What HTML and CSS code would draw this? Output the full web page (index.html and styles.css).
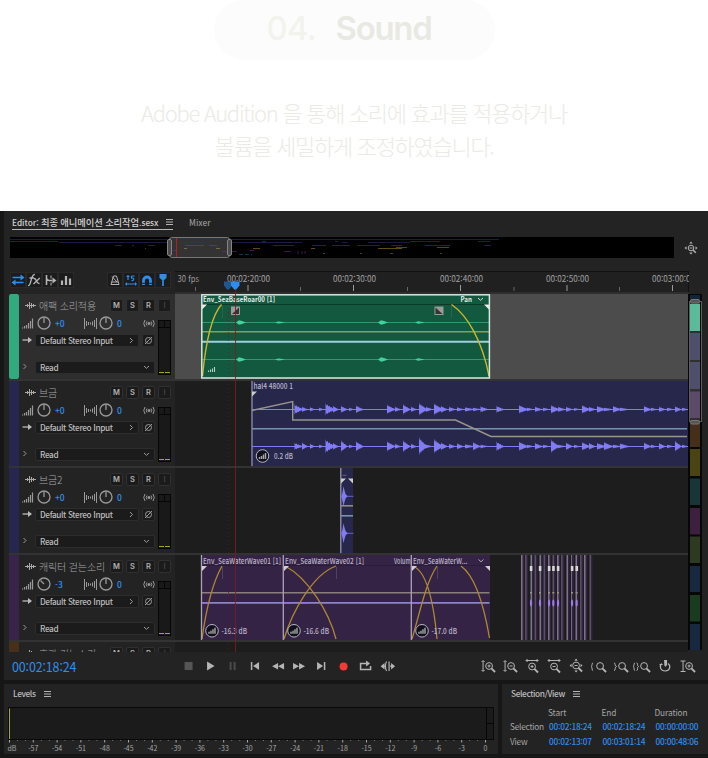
FILE: index.html
```html
<!DOCTYPE html>
<html lang="ko">
<head>
<meta charset="utf-8">
<title>04. Sound</title>
<link rel="stylesheet" href="styles.css">
</head>
<body>
<header class="intro">
  <h1 class="pill"><span class="num">04.</span><span class="word">Sound</span></h1>
  <p class="lead">Adobe Audition 을 통해 소리에 효과를 적용하거나<br>볼륨을 세밀하게 조정하였습니다.</p>
</header>

<svg width="0" height="0" class="defs">
  <defs>
    <g id="burger"><path d="M0 .5h7M0 3h7M0 5.500h7" stroke="#b4b4b4" stroke-width="1"/></g>
    <g id="lens"><circle cx="11" cy="10" r="3.400"/><path d="M13.300 12.300L17 16" stroke-width="1.800"/></g>
    <g id="badge"><circle cx="0" cy="0" r="6.300" fill="#11111d" stroke="#b8b5c4" stroke-width="1"/><path d="M-3 3V1M-1 3V0M1 3V-1.500M3 3V-3" stroke="#aaa" stroke-width="1.400"/></g>
  </defs>
</svg>

<main class="app">
  <section class="editor">
    <nav class="tabs">
      <span class="tab active"><span>Editor: <span class="ko">최종 애니메이션 소리작업</span>.sesx</span><svg width="7" height="7"><use href="#burger"/></svg></span>
      <span class="tab">Mixer</span>
    </nav>

    <div class="overview">
      <svg class="map" viewBox="10 237 664 21" width="664" height="21">
        <rect x="10" y="237" width="664" height="21" fill="#000"/>
        <path d="M10 239.500H499" stroke="#0c2440"/>
        <path d="M10 241.500H58M190 241.500H205M262 241.500H266M335 241.500H338M410 241.500H440M478 241.500H490" stroke="#0d3020"/>
        <path d="M59 242.500H302M342 242.500H348M368 242.500H410" stroke="#1c1840"/>
        <path d="M115 245.500H122M132 245.500H134M148 245.500H155M273 245.500H294M312 245.500H326M332 245.500H350M357 245.500H380M391 245.500H402M425 245.500H450M484 245.500H491" stroke="#2b1d4a"/>
        <path d="M253 248.500H260M311 248.500H315M378 248.500H402" stroke="#604b18"/><path d="M396 247.500H407M437 247.500H449" stroke="#693b10"/>
        <path d="M145 248.500h1M323 253.500h2M360 253.500h2M390 253.500h3M440 253.500h2" stroke="#3d4a20"/>
        <path d="M232 251.500h5M250 250.500h4M284 251.500h7M298 250.500v4M302 251v3M305 251v3" stroke="#3d154a"/>
        <path d="M239 254.500H252" stroke="#173455" stroke-dasharray="4 2"/>
        <rect x="169.500" y="237.500" width="60" height="20" rx="2" fill="#333" stroke="#777"/>
        <path d="M172 239.500H226" stroke="#25364a"/><path d="M180 242.500H206" stroke="#263e35"/><path d="M185 245.500H204M209 245.500H217" stroke="#4a4065"/>
        <path d="M184 248.500H187M216 248.500H220" stroke="#756a38"/><path d="M173 250.500h4M222 251.500h5" stroke="#553067"/>
        <path d="M176.500 238V257" stroke="#b0201c"/>
        <rect x="167.500" y="239.500" width="4" height="16" rx="1.500" fill="#4b4b4b" stroke="#858585"/>
        <rect x="227.500" y="239.500" width="4" height="16" rx="1.500" fill="#4b4b4b" stroke="#858585"/>
      </svg>
      <svg class="navicon" viewBox="0 0 14 14" width="14" height="14" fill="none" stroke="#b4b4b4"><circle cx="7" cy="7" r="2.800"/><path d="M5.500 7h3"/><path d="M9 9l2.800 2.800" stroke-width="1.500"/><path d="M7 .5L5.300 2.500h3.400zM7 13.500l-1.700-2h3.400zM.5 7l2-1.700v3.400zM13.500 7l-2-1.700v3.400z" fill="#b4b4b4" stroke="none"/></svg>
    </div>

    <div class="toolrow">
      <div class="tools">
        <svg class="tool on" viewBox="1 1 14 14"><path d="M2.500 5.500H12M4.500 10.500H13.500" stroke-width="1.600"/><path d="M10.500 2.500l4 3-4 3zM5.500 7.500l-4 3 4 3z" class="f"/></svg>
        <svg class="tool" viewBox="1 1 14 14"><path d="M2 13.500C5.500 14.500 4.500 1.800 8.800 2.500M3.500 6H8M8 6.500c3.500 0 1.500 5.500 5.500 5M13.800 6L7.500 12" stroke-width="1.300"/></svg>
        <svg class="tool" viewBox="1 1 14 14"><path d="M4.500 3V13M4.500 4v2c0 2 1 2.500 3 2.500h3" stroke-width="1.600"/><path d="M10.500 5.500l4 3-4 3z" class="f"/><path d="M9 3.500v3M9 10.500v3"/></svg>
        <svg class="tool" viewBox="1 1 14 14"><path d="M4 13V8.500M8 13V4M12 13V6.500" stroke-width="2.200"/></svg>
        <span class="grow"></span>
        <svg class="tool" viewBox="1 1 14 14"><path d="M4 12.500L6.500 4h3l2.500 8.500zM5 10h6M5 4.500l5 5.500"/></svg>
        <svg class="tool on" viewBox="1 1 14 14"><path d="M5 3v5M3.500 4.500h3M8.500 4h3M8.500 4v2c3-.5 3 3 0 2.500M3.500 12h9" stroke-width="1.200"/><path d="M4 10l-2 2 2 2zM12 10l2 2-2 2z" class="f"/></svg>
        <svg class="tool on" viewBox="1 1 14 14"><path d="M4.500 13V8.500a3.500 3.500 0 017 0V13" stroke-width="2.800"/><path d="M2.500 11.300h4M9.500 11.300h4" stroke="#1c1c1c"/></svg>
        <svg class="tool on" viewBox="1 1 14 14"><path d="M8 6v8" stroke-width="1.700"/><path d="M4.500 2h7v4L9 8H7L4.500 6z" class="f"/></svg>
      </div>
      <svg class="ruler" viewBox="175 271 514 23" width="514" height="23" id="ruler"></svg>
    </div>

    <div class="session">
      <div class="tracks" id="tracks"></div>
      <svg class="minimap" viewBox="688 294 15 358" width="15" height="358">
        <rect x="688" y="294" width="14" height="356" fill="#070707"/>
        <rect x="690" y="295" width="10" height="7" fill="#12243c"/>
        <rect x="690" y="300" width="10" height="124" fill="#303030"/>
        <rect x="690" y="304" width="10" height="27" fill="#5bba9a"/>
        <rect x="690" y="333" width="10" height="27" fill="#504e6d"/>
        <rect x="690" y="362" width="10" height="27" fill="#504e6d"/>
        <rect x="690" y="391.500" width="10" height="26.500" fill="#5b4b68"/>
        <rect x="690" y="424" width="10" height="23" fill="#462f1a"/>
        <rect x="690" y="449" width="10" height="27" fill="#4a4414"/>
        <rect x="690" y="478.500" width="10" height="26.500" fill="#1a3536"/>
        <rect x="690" y="508" width="10" height="26.500" fill="#3d1f40"/>
        <rect x="690" y="536.500" width="10" height="26.500" fill="#2d3920"/>
        <rect x="690" y="566" width="10" height="26" fill="#18293f"/>
        <rect x="690" y="595" width="10" height="26.500" fill="#1b3b20"/>
        <rect x="690" y="624" width="10" height="26" fill="#18293f"/>
        <rect x="689.500" y="301.500" width="12" height="120" fill="none" stroke="#5c5c5c"/>
        <rect x="690.500" y="299.500" width="9" height="3.500" rx="1.500" fill="#555" stroke="#777"/>
        <rect x="690.500" y="420.500" width="9" height="3.500" rx="1.500" fill="#555" stroke="#777"/>
      </svg>
      <svg class="playhead" viewBox="220 281 24 371" width="24" height="371">
        <path d="M228.500 292V652" stroke="#6c1518" stroke-opacity=".7" stroke-dasharray="1 3"/>
        <path d="M235.500 290V652" stroke="#7d1c1e" stroke-opacity=".85"/>
        <path d="M224 281.500h8v4l-3 4h-2l-3-4z" fill="#22568f"/>
        <path d="M231 281.500h8.500v4l-3.300 4h-2l-3.200-4z" fill="#2f8eed"/>
      </svg>
    </div>

    <div class="transport">
      <span class="clock">00:02:18:24</span>
      <div class="btns">
        <svg viewBox="0 0 22 22"><rect x="7.500" y="7" width="8" height="8" fill="#555" stroke="none"/></svg>
        <svg viewBox="0 0 22 22"><path d="M8 6.500l7.500 4.500-7.500 4.500z" class="f"/></svg>
        <svg viewBox="0 0 22 22"><path d="M9.500 7v8M13.500 7v8" stroke="#4c4c4c" stroke-width="2"/></svg>
        <svg viewBox="0 0 22 22"><path d="M8.500 7v8" stroke-width="1.500"/><path d="M16 7v8l-6-4z" class="f"/></svg>
        <svg viewBox="0 0 22 22"><path d="M12 8v6.500l-6-3.300zM18 8v6.500l-6-3.300z" class="f"/></svg>
        <svg viewBox="0 0 22 22"><path d="M5 8v6.500l6-3.300zM11 8v6.500l6-3.300z" class="f"/></svg>
        <svg viewBox="0 0 22 22"><path d="M14.500 7v8" stroke-width="1.500"/><path d="M7 7v8l6-4z" class="f"/></svg>
        <svg viewBox="0 0 22 22"><circle cx="11.500" cy="11.500" r="4" fill="#f23a36" stroke="none"/></svg>
        <svg viewBox="0 0 22 22"><path d="M9 8.500H6.500v6h10V11M9 8.500h4" stroke-width="1.500"/><path d="M12 5.500l4 3-4 3z" class="f"/></svg>
        <svg viewBox="0 0 22 22"><path d="M7 11.200h3M14 11.200h3M10.500 6.500c-1.500 2-1.500 7.500 0 9.500M13 6.500v9.500" stroke-width="1.200"/><path d="M8.500 8v6.400l-4-3.200zM15 8v6.400l4-3.200z" class="f"/></svg>
      </div>
      <div class="btns zooms">
        <svg viewBox="0 0 22 22"><path d="M6 6v10M4.500 7L6 5.500 7.500 7M4.500 15L6 16.500 7.500 15"/><g transform="translate(1 1)"><use href="#lens"/><path d="M9.500 10h3M11 8.500v3"/></g></svg>
        <svg viewBox="0 0 22 22"><path d="M6 6v10M4.500 7L6 5.500 7.500 7M4.500 15L6 16.500 7.500 15"/><g transform="translate(1 1)"><use href="#lens"/><path d="M9.500 10h3"/></g></svg>
        <svg viewBox="0 0 22 22"><path d="M5 5.500h12M6.500 4L5 5.500 6.500 7M15.500 4L17 5.500 15.500 7"/><g transform="translate(0 1.500)"><use href="#lens"/><path d="M9.500 10h3M11 8.500v3"/></g></svg>
        <svg viewBox="0 0 22 22"><path d="M5 5.500h12M6.500 4L5 5.500 6.500 7M15.500 4L17 5.500 15.500 7"/><g transform="translate(0 1.500)"><use href="#lens"/><path d="M9.500 10h3"/></g></svg>
        <svg viewBox="0 0 22 22"><g transform="translate(0 .5)"><use href="#lens"/><path d="M9.500 10h3"/></g><path d="M11 3.500L9.300 5.700h3.400zM11 17.500l-1.700-2h3.400zM4.500 10.500l2-1.700v3.400zM17.500 10.500l-2-1.700v3.400z" class="f"/></svg>
        <svg viewBox="0 0 22 22"><path d="M6 8c-2 0 0 3-2 3.500 2 .5 0 4 2 4"/><g transform="translate(2 1)"><use href="#lens"/></g></svg>
        <svg viewBox="0 0 22 22"><path d="M5 8c2 0 0 3 2.500 3.500C5 12 7 15.500 5 15.500"/><g transform="translate(2 1)"><use href="#lens"/></g></svg>
        <svg viewBox="0 0 22 22"><path d="M4 8c-2 0 0 3-2 3.500 2 .5 0 4 2 4M5.500 8c2 0 0 3 2 3.500-2 .5 0 4-2 4"/><g transform="translate(2 1)"><use href="#lens"/></g></svg>
        <svg viewBox="0 0 22 22"><path d="M7.500 8.500c-2.500 3-1 7.500 3.500 7.500 5 0 6-5 3-7.500M11 11V5.500M5.500 9.500h3" stroke-width="1.200"/><path d="M8.500 5.500h5M10 5h3v5l-2 2z" class="f"/></svg>
        <svg viewBox="0 0 22 22"><path d="M4.500 6h5M4.500 16.500h5M7 6v10.500"/><g transform="translate(2 1)"><use href="#lens"/><path d="M9.500 10h3M11 8.500v3"/></g></svg>
      </div>
    </div>
  </section>

  <div class="bottom">
    <section class="panel levels">
      <h2>Levels<svg width="7" height="7"><use href="#burger"/></svg></h2>
      <svg id="levels" viewBox="4 703 494 51" width="494" height="51"></svg>
    </section>
    <section class="panel selview">
      <h2>Selection/View<svg width="7" height="7"><use href="#burger"/></svg></h2>
      <div class="grid">
        <span></span><b class="st">Start</b><b class="st">End</b><b class="st">Duration</b>
        <b>Selection</b><i>00:02:18:24</i><i>00:02:18:24</i><i>00:00:00:00</i>
        <b>View</b><i>00:02:13:07</i><i>00:03:01:14</i><i>00:00:48:06</i>
      </div>
    </section>
  </div>
</main>
<script src="app.js"></script>
</body>
</html>
```
FILE: styles.css
```css
* { box-sizing: border-box; }
body { margin: 0; width: 708px; height: 758px; overflow: hidden; background: #fff; font-family: "Noto Sans CJK KR", "Noto Sans", sans-serif; }
svg { display: block; }
.defs { position: absolute; }
.intro { height: 211px; text-align: center; overflow: hidden; }
.pill { margin: 0 auto; width: 281px; height: 60px; background: #fcfcfc; border-radius: 30px; display: flex; padding-left: 53px; font-family: Inter, sans-serif; font-size: 33px; line-height: 57px; gap: 20px; }
.num { color: #f3f3ee; font-weight: 500; width: 49px; letter-spacing: -.8px; text-align: left; }
.word { color: #e9e9e3; font-weight: 600; letter-spacing: -1.300px; }
.lead { margin: 36px 0 0; font-weight: 300; font-size: 22px; line-height: 32.500px; letter-spacing: -1.300px; color: #ebebe6; white-space: nowrap; }

.app { height: 547px; background: #161616; color: #b9b9b9; font-size: 9px; padding-left: 4px; }
.editor { height: 469px; background: #232323; }
.tabs { height: 26px; display: flex; padding: 3px 0 0 8px; gap: 16px; line-height: 14px; font-weight: 500; font-size: 8.300px; }
.tab { height: 16px; display: flex; align-items: center; color: #959595; white-space: nowrap; }
.tab.active { width: 161px; justify-content: space-between; color: #d2d2d2; border-bottom: 1.500px solid #b8b8b8; }
.tab svg { margin-top: 2px; }
.ko { font-size: 9.300px; letter-spacing: -.1px; }
.overview { height: 21px; display: flex; padding-left: 6px; gap: 10px; }
.navicon { margin-top: 4px; }
.toolrow { display: flex; margin-top: 13px; height: 23px; }
.tools { width: 171px; display: flex; padding: 1px 4px 0 6px; }
.tool { width: 16px; height: 16px; background: #1c1c1c; border: 1px solid #292929; fill: none; stroke: #b5b5b5; }
.tool .f, .btns .f { fill: #b5b5b5; stroke: none; }
.tool.on { stroke: #2f8eed; }
.tool.on .f { fill: #2f8eed; }
.grow { flex: 1; }
.session { position: relative; display: flex; height: 358px; padding-left: 5px; }
.tracks { width: 679px; height: 358px; overflow: hidden; background: #333; }
.playhead { position: absolute; left: 216px; top: -13px; }
.track { display: flex; height: 85px; margin-bottom: 2px; background: #1d1d1d; }
.strip { width: 10px; flex: none; }
.head { width: 156px; flex: none; background: #232323; display: flex; padding: 5px 4px 0 3px; gap: 3px; }
.track.sel .head { background: #2e2e2e; }
.track.sel .strip { border-radius: 2px; }
.left { width: 133px; }
.left svg { flex: none; }
.row { display: flex; align-items: center; height: 13px; }
.name { gap: 3px; color: #a8a8a8; font-size: 10px; padding-left: 3px; }
.name .t { flex: 1; line-height: 13px; white-space: nowrap; font-weight: 300; letter-spacing: -.15px; }
.btn { width: 13px; height: 13px; background: #1b1b1b; border: 1px solid #303030; border-radius: 2px; color: #b0b0b0; font: 600 7.500px/12px Inter, sans-serif; text-align: center; flex: none; }
.btn.off { color: #444; }
.knobs { height: 22px; color: #2f8eed; font-weight: 500; font-size: 8.500px; }
.knobs svg + svg { margin-left: 3px; }
.knobs .v { width: 33px; padding-left: 4px; flex: none; }
.knobs .v + svg + svg { margin-left: 2px; }
.knobs .p { width: 30px; padding-left: 4px; flex: none; }
.io { gap: 3px; }
.box { height: 13px; background: #1b1b1b; border: 1px solid #2d2d2d; border-radius: 2px; display: flex; align-items: center; justify-content: space-between; padding: 0 4px; line-height: 11px; color: #bcbcbc; font-weight: 500; font-size: 8.200px; letter-spacing: -.35px; white-space: nowrap; }
.box.in { width: 104px; }
.box.ph { width: 13px; padding: 0; justify-content: center; }
.box.read { width: 120px; }
.auto { margin-top: 14px; gap: 3px; }
.right { width: 13px; display: flex; flex-direction: column; gap: 8px; }
.lane { flex: none; }
.lane text, .ruler text, .levels text { font-family: "Noto Sans CJK KR", sans-serif; }

.transport { display: flex; height: 28px; align-items: center; padding-left: 8px; }
.clock { width: 165px; color: #2f8eed; font-size: 12.500px; line-height: 16px; padding-top: 2px; letter-spacing: -.15px; }
.btns { display: flex; width: 221.500px; }
.btns svg { width: 22.150px; height: 22px; fill: none; stroke: #b5b5b5; flex: none; }
.zooms { margin-left: 78px; }
.bottom { display: flex; gap: 4px; margin-top: 4px; height: 70px; }
.panel { background: #232323; }
.levels { width: 494px; }
.selview { flex: 1; }
.panel h2 { margin: 0; font-size: 8.300px; font-weight: 500; letter-spacing: -.38px; color: #bdbdbd; height: 19px; line-height: 19px; display: flex; align-items: center; gap: 8px; padding-left: 9px; }
.panel h2 svg { margin-top: 2px; }
.grid { display: grid; grid-template-columns: 39px 53.500px 53px 50px; grid-template-rows: 14px 15px 15px; padding: 3px 0 0 8px; font-size: 8.300px; line-height: 13px; white-space: nowrap; }
.grid b { font-weight: 400; color: #a6a6a6; letter-spacing: -.25px; }
.grid b.st { margin-left: -1px; letter-spacing: -.1px; }
.grid i { font-style: normal; font-weight: 500; color: #2f8eed; letter-spacing: -.22px; }
```
FILE: app.js
```js
const TEXT = (x, y, s, w, fill = '#c8c6d2', size = 7.5, wt = 500) =>
  `<text x="${x}" y="${y}" font-size="${size}" font-weight="${wt}" fill="${fill}"${w ? ` textLength="${w}" lengthAdjust="spacingAndGlyphs"` : ''}>${s}</text>`;

// Ruler
let r = '<rect x="175" y="271" width="514" height="23" fill="#202020"/><path d="M175 271.500H688.500V292" fill="none" stroke="#111"/><path d="M175 293H689" stroke="#2e2e2e" stroke-width="2"/>';
r += TEXT(177.5, 282, '30 fps', 21.5, '#9c9c9c', 8.5, 400);
[[227, '00:02:20:00'], [333, '00:02:30:00'], [440, '00:02:40:00'], [546, '00:02:50:00'], [652, '00:03:00:00']].forEach(([x, s]) => {
  r += TEXT(x, 282, s, 43, '#a0a0a0', 8.5, 400);
});
[248, 353.500, 460.500, 567, 672.500].forEach(x => { r += `<path d="M${x} 285v6" stroke="#999"/>`; });
[195.500, 300.500, 407.500, 514, 619.500].forEach(x => { r += `<path d="M${x} 287v4" stroke="#666"/>`; });
document.getElementById('ruler').innerHTML = r;

// Waveform built from bursts [x, amplitude, length]
function wave(bursts, cy, x0, x1, color) {
  let d = `M${x0} ${cy - .4}H${x1}V${cy + .4}H${x0}z`;
  bursts.forEach(([x, a, len]) => {
    let top = `M${x} ${cy}`, bot = '';
    for (let i = 0; i <= len; i++) {
      const k = a * .9 * Math.pow(1 - i / (len + 1), 1.2) * (i % 2 ? .65 : 1) + .3;
      top += `L${x + i} ${cy - k}`;
      bot = `L${x + i} ${cy + k * .9}` + bot;
    }
    d += top + bot + 'z';
  });
  return `<path d="${d}" fill="${color}"/>`;
}
const music = [[294.500,6,8],[302,3,5],[310,2.500,4],[319,2,4],[325.500,7,9],[333,4,5],[341,4,6],[349,2,4],[356,4.500,7],[387,5.500,8],[395,3,5],[403,6,7],[411,3,5],[419,7.500,8],[426,3,6],[434,7,9],[441,4,6],[449,3,6],[457,2.500,6],[465,2.500,9],[473,2,7],[480.500,3.500,7],[496.500,4,7],[519,5,9],[527,2,6],[535,3,7],[543,2,6],[551,5,8],[558,3,7],[566,3,6],[574,1.500,5],[582,5,8],[589,3,6],[597,4,9],[604,2,9],[613,4,8],[620,2,9],[644,4,7],[651,2,5],[659,3,6],[667,2,6],[675,3.500,6],[682,2,5]];
const music2 = music.map(([x, a, l], i) => [x, Math.max(2, a + [-2, 1.5, .5, 0, 1, 0, 3][i % 7]), l]);

const badge = (x, y) => `<use href="#badge" x="${x}" y="${y}"/>`;
const line = (d, c, w = 1, extra = '') => `<path d="${d}" fill="none" stroke="${c}" stroke-width="${w}" ${extra}/>`;

// Lane 1
let roar = '<rect x="175" y="294" width="513" height="85" fill="#4c4c4c"/><rect x="201.800" y="295" width="287.400" height="83" fill="#12593f"/>';
roar += line('M202 304.500H489', '#0a3a29') + line('M202 322.500H489M202 359.500H489', '#2f9870') + line('M202 331.700H489', '#8c9b62', 1.5) + line('M202 341.800H489', '#a0cfdc', 2);
[322.5, 359.5].forEach(y => {
  [[240,2.200],[382,2.200],[279,.9],[419,1.200]].forEach(([x, h]) => { roar += `<path d="M${x - 4} ${y}L${x - 1} ${y - h}L${x + 2} ${y - h * .7}L${x + 6} ${y}L${x + 2} ${y + h * .7}L${x - 1} ${y + h}z" fill="#42d29c"/>`; });
});
roar += line('M202.500 376C206 340 212 315 221.500 304.500M451.500 304.500C467 315 482 340 489 376', '#d0b52e', 1.4) + line('M222.500 306v12M451.500 306v12', '#286b53', .8);
[[231, 0], [434.500, 1]].forEach(([x, f]) => { roar += `<rect x="${x}" y="306.500" width="9" height="8.500" fill="#9b9b9b"/><path d="${f ? `M${x + 1} 314V307.500L${x + 8} 314z` : `M${x + 1} 314L${x + 8} 307.500V314z`}" fill="#343434"/>`; });
roar += '<path d="M202 304.500h5l-5 5zM489 304.500h-5l5 5z" fill="#eee"/>' + line('M208.500 372v-1.500M210.500 372v-2.500M212.500 372v-3.500M214.500 372v-5', '#b5cfc5', 1.100);
roar += '<rect x="201.800" y="294.800" width="287.600" height="83.200" fill="none" stroke="#d5e8df" stroke-width="1.500"/>';
roar += TEXT(203, 301.8, 'Env_SeaBaseRoar00 [1]', 72, '#e3ece8', 7, 700) + TEXT(460.500, 301.8, 'Pan', 11.5, '#e3ece8', 7, 700) + line('M478 298l2.500 2.300L483 298', '#ddd');

// Lane 2
let hal = '<rect x="251" y="381" width="437" height="85" fill="#27264b"/>' + line('M252 381V466', '#817f9d', 1.5);
hal += wave(music, 409.500, 252, 688, '#817cf3') + wave(music2, 446.500, 252, 688, '#817cf3');
hal += line('M252 428.800H687', '#7794ab', 1.6) + line('M252 410.500L292.700 401.500V420H455.500L491 436.500H687', '#98968c', 1.4);
hal += '<path d="M252 391.500h5l-5 5z" fill="#ccc"/>' + TEXT(253.5, 389, 'hal4 48000 1', 39.5, '#b9b8c8') + badge(262.5, 456) + TEXT(274, 459.3, '0.2 dB', 19, '#b9b8c8');

// Lane 3
let small = '<rect x="340" y="468" width="13" height="85" fill="#27264b"/>' + line('M340.800 468V553', '#9594ad', 1.3);
small += line('M341 505.800H353', '#8f8d7f', 1.6) + line('M341 515.800H353', '#7794ab', 1.6) + line('M341 496.300H353.500M341 533.300H353.500', '#6f6bdb', .9) + line('M342.500 475.300h4', '#77758f', .8);
[496.3, 533.3].forEach(y => { small += `<path d="M341.500 ${y}l1-4 1-6 1.200 5 1 3 2 2-2 2-1 3-1.200 5-1-5z" fill="#817cf3"/>`; });
small += '<path d="M341 478.500h5l-5 5zM353 478.500h-5l5 5z" fill="#ccc"/>';

// Lane 4
let sea = '<rect x="201" y="555" width="289" height="85" fill="#352346"/>' + line('M202 565.500H489', '#2a1b39');
sea += line('M202 592.700H489.500', '#8a807b', 1.6) + line('M202 602.800H489.500', '#8b84c6', 1.7) + line('M202 602.800H208M284 602.800H291M300 602.800h8M412 602.800h8', '#9470e0', 1.5);
sea += line('M202 639C206 610 213 582 222 566M284 639C292 612 313 574 336 566M285 566C308 578 329 612 336 639M412 639C420 612 426 582 437 566M413 566C428 572 434 606 437 639M461 566C475 576 484 606 489.500 638', '#ad8a32', 1.3);
sea += line('M201.500 555V640M283.300 555V640M411.300 555V640', '#aaa3b6', 1.3) + line('M336.500 567v12M437.500 567v12M222.500 567v12', '#584968', .8);
sea += '<path d="M202 566h5l-5 5zM284 566h5l-5 5zM412 566h5l-5 5zM490 566h-5l5 5z" fill="#d0ccd5"/>';
sea += TEXT(203, 563.7, 'Env_SeaWaterWave01 [1]', 78, '#bbb4c6') + TEXT(285, 563.7, 'Env_SeaWaterWave02 [1]', 79, '#bbb4c6') + TEXT(394, 563.7, 'Volum', 16.500, '#bbb4c6') + TEXT(413, 563.7, 'Env_SeaWaterW...', 54.5, '#bbb4c6') + line('M478.500 559.500l2.500 2.300 2.500-2.300', '#aaa');
[[212, '-16.3 dB'], [294, '-16.6 dB'], [422, '-17.0 dB']].forEach(([x, s]) => { sea += badge(x, 630.8) + TEXT(x + 9.5, 633.8, s, 25.500, '#bbb4c6'); });
[154,166,182,194,209,221,235,248,262,274,290,303,317,331,343,359].forEach((p, i) => { const x = 470 + p / 3; sea += `<rect x="${x + .5}" y="555" width="2.300" height="85" fill="#352346"/>` + line(`M${x + .5} 555V640`, i % 2 ? '#716b77' : '#a8a0b0', 1); });
[183,210,237,250,264,306,320].forEach(p => { const x = 470 + p / 3; sea += `<rect x="${x - 1.2}" y="566" width="2.600" height="5" fill="#d8d8d8"/><ellipse cx="${x}" cy="603" rx="1.100" ry="3.500" fill="#9d7ae6"/><rect x="${x - 1}" y="592" width="2" height="1.500" fill="#9a927f"/>`; });

const lanes = [
  { y: 294, n: '애팩 소리적용', v: '+0', c: '#32aa7f', sel: 1, svg: roar },
  { y: 381, n: '브금', v: '+0', c: '#27264f', svg: hal },
  { y: 468, n: '브금2', v: '+0', c: '#27264f', svg: small },
  { y: 555, n: '캐릭터 걷는소리', v: '-3', c: '#38234b', svg: sea },
  { y: 642, n: '효과 걷는소리', v: '+0', c: '#472f1a', svg: '' }
];
const ico = (w, h, s) => `<svg width="${w}" height="${h}" viewBox="0 0 ${w} ${h}" fill="none" stroke="#9a9a9a">${s}</svg>`;
const knob = neg => ico(14, 14, `<circle cx="7" cy="7" r="6" stroke-width="1.300"/><path d="${neg ? 'M7 7L3.500 3.500' : 'M7 7V2'}" stroke-width="1.300"/>`);
document.getElementById('tracks').innerHTML = lanes.map(t => `
<div class="track${t.sel ? ' sel' : ''}">
  <div class="strip" style="background:${t.c}"></div>
  <div class="head">
    <div class="left">
      <div class="row name">${ico(11, 9, '<path d="M0 4.500h11M2.500 3v3M4.500 1v7M6.500 2v5M8.500 3v3" stroke="#aaa"/>')}<span class="t">${t.n}</span><span class="btn">M</span><span class="btn">S</span><span class="btn">R</span></div>
      <div class="row knobs">${ico(12, 11, '<path d="M.5 10.500v-1M2.500 10.500V8M4.500 10.500V7M6.500 10.500V5M8.500 10.500V3M10.500 10.500V.5" stroke-width="1.200"/>')}${knob(t.v === '-3')}<span class="v">${t.v}</span>${ico(13, 11, '<path d="M.5 0v11M2.500 3v5M4.500 4v3M6.500 4.500v2M8.500 3.500v4M10.500 2v7M12.500 0v11"/>')}${knob(0)}<span class="p">0</span>${ico(12, 9, '<circle cx="6" cy="4.500" r="1" fill="#aaa"/><path d="M4 2.500q-1.500 2 0 4M8 2.500q1.500 2 0 4M2 1Q-.500 4.500 2 8M10 1q2.500 3.500 0 7"/>')}</div>
      <div class="row io">${ico(10, 9, '<path d="M.5 4H8" stroke="#bbb" stroke-width="1.300"/><path d="M6 1l4 3-4 3z" fill="#bbb" stroke="none"/>')}<span class="box in">Default Stereo Input${ico(5, 7, '<path d="M1 1l2.500 2.500L1 6"/>')}</span><span class="box ph">${ico(9, 9, '<circle cx="4.500" cy="4.500" r="3"/><path d="M1 8L8 1"/>')}</span></div>
      <div class="row auto">${ico(10, 9, '<path d="M1.500 1l2.500 2.500L1.500 6"/>')}<span class="box read">Read${ico(7, 5, '<path d="M1 1l2.500 2.300L6 1"/>')}</span></div>
    </div>
    <div class="right"><span class="btn off">I</span>${ico(13, 55, '<rect x=".500" y=".500" width="12" height="54" fill="#191919" stroke="#060606"/><path d="M1 7.500h11M6.500 1v6" stroke="#060606"/><path d="M1 52.500h5M7 52.500h5" stroke="#a9a51a"/>')}</div>
  </div>
  <svg class="lane" width="513" height="85" viewBox="175 ${t.y} 513 85">${t.svg}</svg>
</div>`).join('');

// Level meter
let m = '<rect x="8.500" y="707.500" width="485" height="32" fill="#1b1b1b" stroke="#090909"/><path d="M486.500 707V740M486.500 723.500H494" stroke="#060606"/><path d="M9.500 708.500V739" stroke="#a9a51a"/>';
for (let i = 0; i <= 20; i++) {
  const x = 9.500 + i * 23.800;
  m += `<path d="M${x} 740v2.500" stroke="#aaa"/>`;
  if (i < 20) m += `<path d="M${x + 8} 740v1M${x + 16} 740v1" stroke="#777"/>`;
  m += `<text x="${x + (i ? 0 : 2.500)}" y="751" font-size="7" font-weight="400" text-anchor="middle" fill="#a4a4a4">${i ? i - 20 ? '-' + (60 - i * 3) : '0' : 'dB'}</text>`;
}
document.getElementById('levels').innerHTML = m;
```
